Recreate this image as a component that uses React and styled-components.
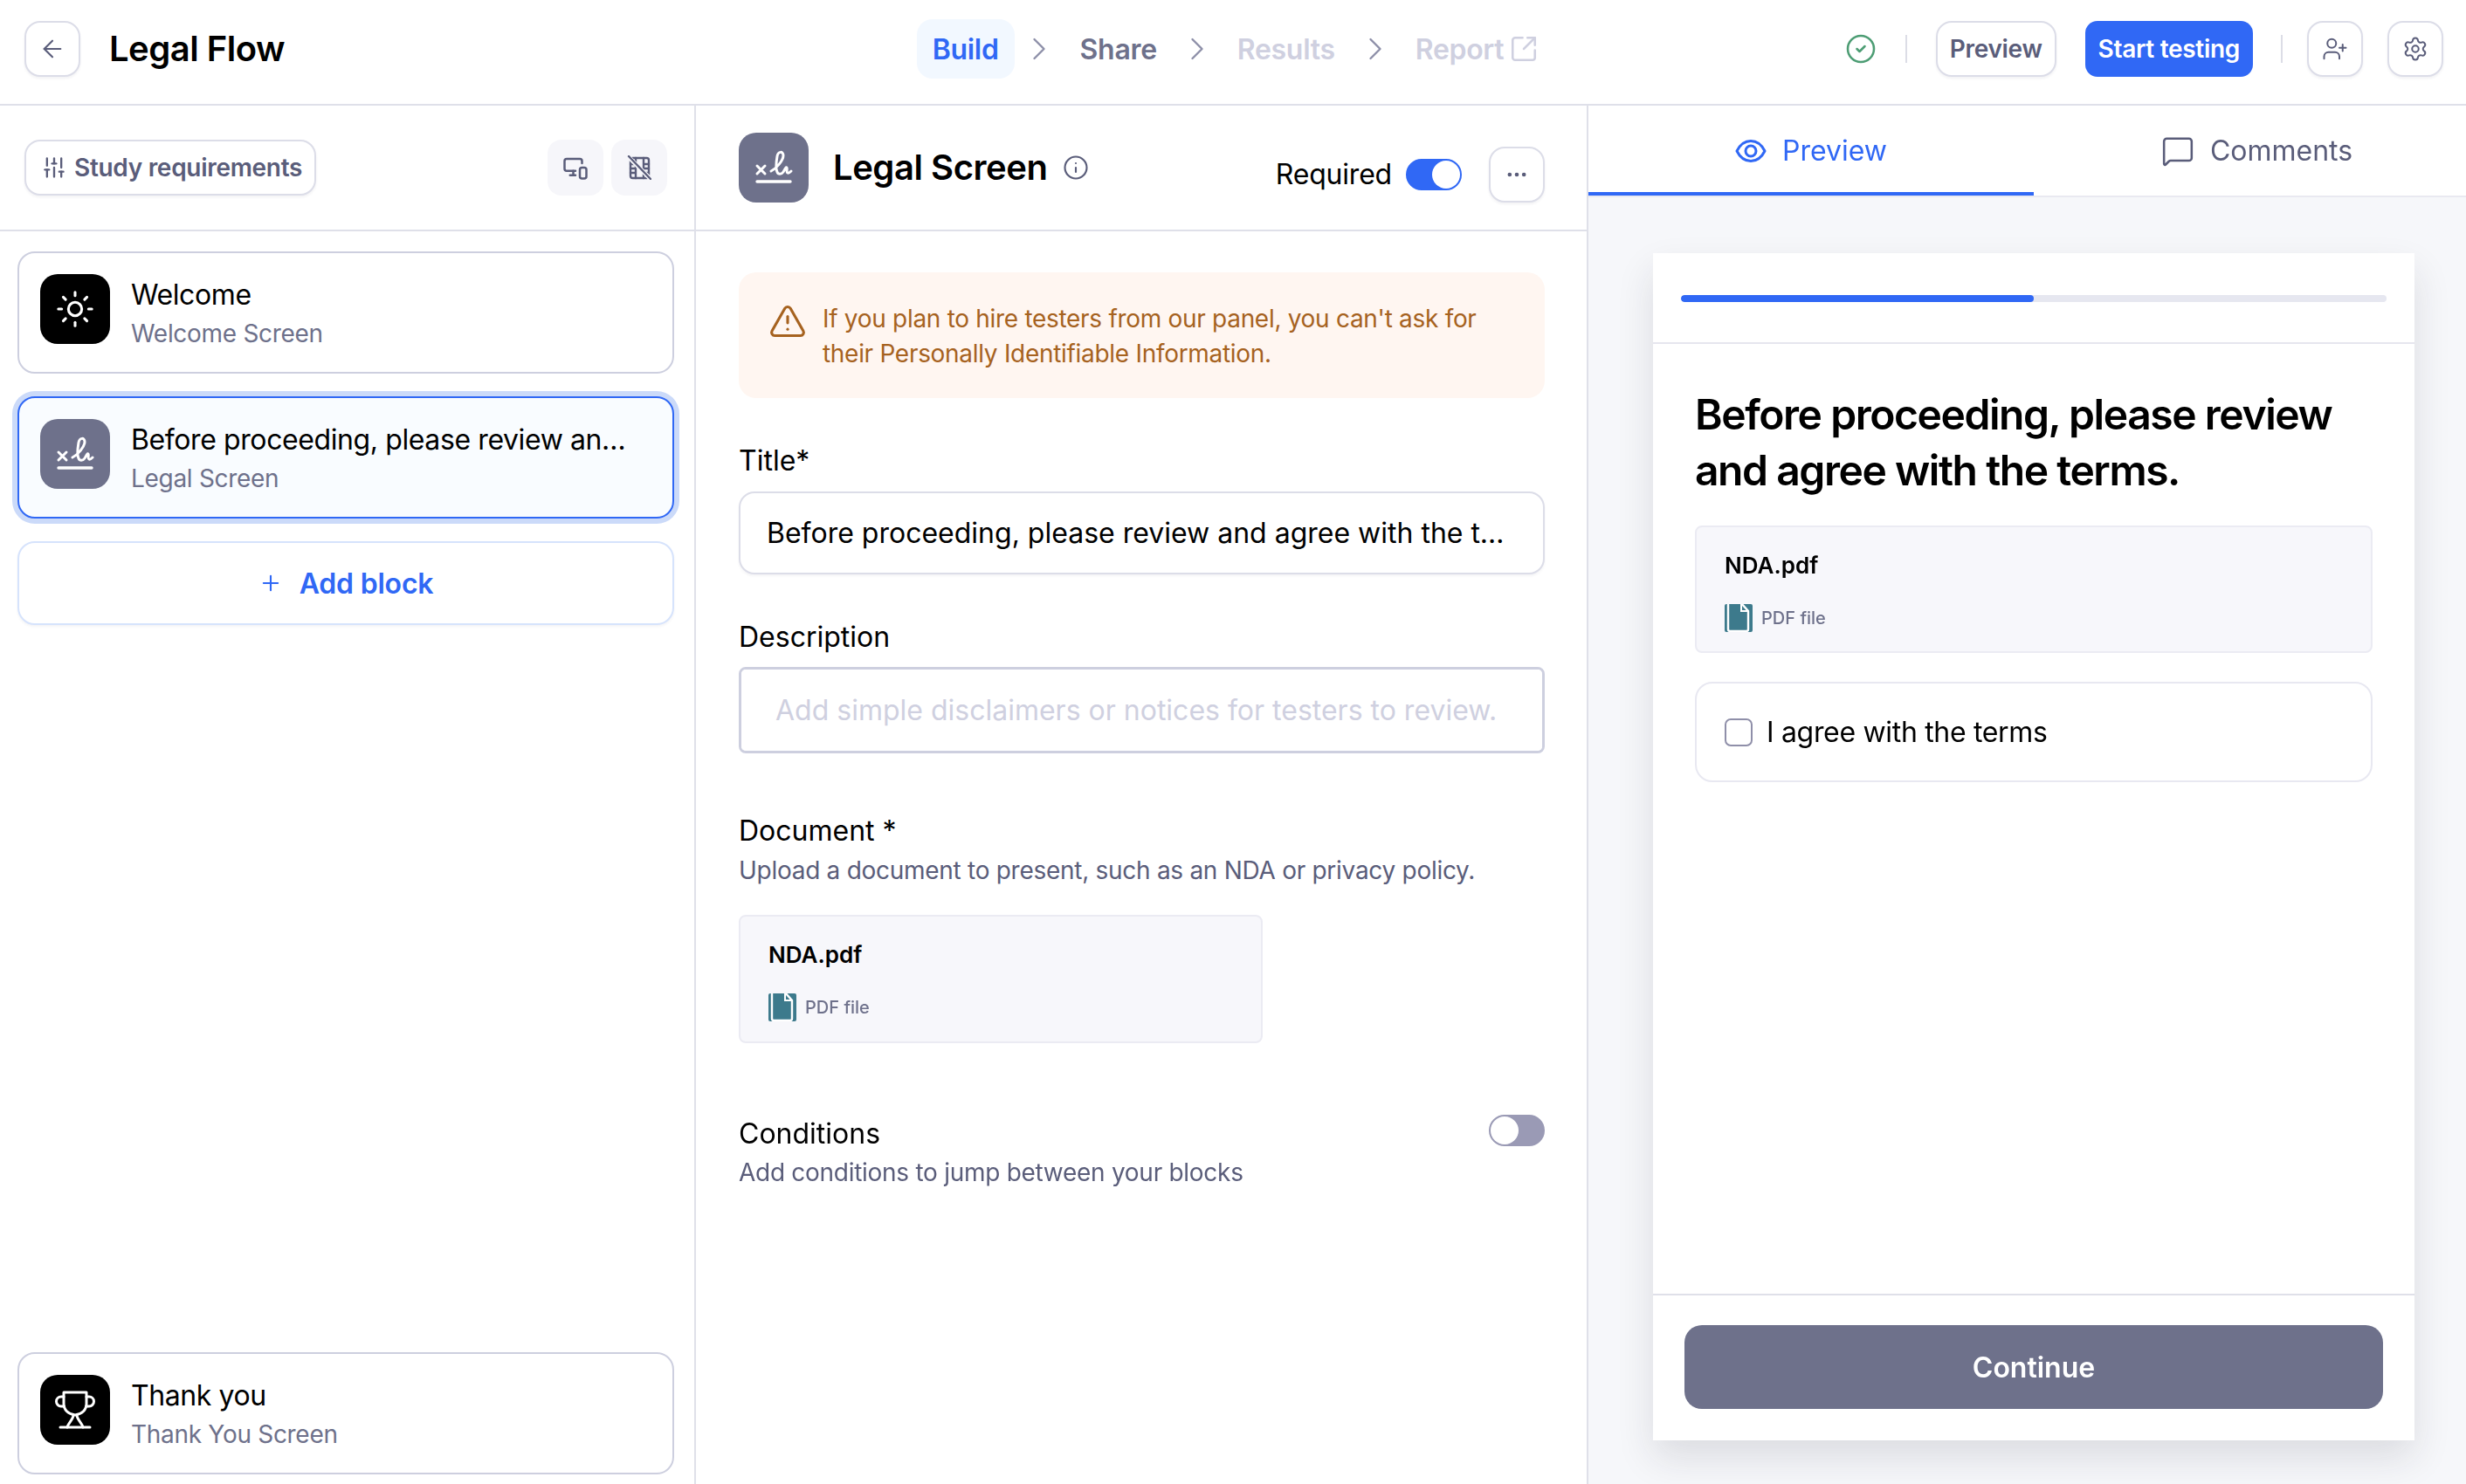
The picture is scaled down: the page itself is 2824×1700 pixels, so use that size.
import React from 'react';
import styled, { createGlobalStyle } from 'styled-components';
import {
  ArrowLeft, ChevronRight, SquareArrowOutUpRight, CircleCheck, UserPlus, Settings,
  SlidersVertical, MonitorSmartphone, Info, Ellipsis, Sun, Plus, TriangleAlert, MessageSquare,
} from 'lucide-react';

const Global = createGlobalStyle`
  * { box-sizing: border-box; }
  html, body { margin: 0; padding: 0; background: #fff; }
  body { font-family: Inter, "Noto Sans", sans-serif; color: #000; }
`;

const BLUE = '#3068f5';
const SLATE = '#5a5d7a';
const MUTED = '#6e718b';
const LINE = '#dfe0e9';

const Page = styled.div`
  width: 2824px;
  height: 1700px;
  display: flex;
  flex-direction: column;
  overflow: hidden;
`;

const TopBar = styled.header`
  height: 121px;
  flex: none;
  display: grid;
  grid-template-columns: 1fr auto 1fr;
  align-items: center;
  padding: 0 26px 7px 28px;
  border-bottom: 2px solid ${LINE};
`;

const TopLeft = styled.div`
  display: flex;
  align-items: center;
  gap: 33px;
`;

const AppTitle = styled.h1`
  margin: 0;
  font-size: 40px;
  line-height: 48px;
  font-weight: 600;
  letter-spacing: -0.5px;
`;

const OutlineButton = styled.button`
  height: 64px;
  min-width: 64px;
  padding: ${(p) => (p.$square ? '0' : '0 14px')};
  display: inline-flex;
  align-items: center;
  justify-content: center;
  background: #fff;
  border: 2px solid #dcdde8;
  border-radius: 18px;
  box-shadow: 0 2px 3px rgba(30, 32, 70, 0.06);
  color: ${SLATE};
  font: 600 28px Inter, sans-serif;
  letter-spacing: -0.3px;
`;

const Steps = styled.nav`
  display: flex;
  align-items: center;
  margin-right: 14px;
`;

const Step = styled.span`
  height: 68px;
  padding: 0 ${(p) => (p.$active ? '18px' : '0')};
  display: inline-flex;
  align-items: center;
  gap: 6px;
  border-radius: 18px;
  font-size: 32px;
  font-weight: 600;
  letter-spacing: -0.3px;
  background: ${(p) => (p.$active ? '#f2f8ff' : 'transparent')};
  color: ${(p) => p.$color};
`;

const StepChevron = styled(ChevronRight)`
  color: #8d8fa8;
  margin: 0 ${(p) => p.$right}px 0 ${(p) => p.$left}px;
  flex: none;
`;

const TopRight = styled.div`
  display: flex;
  align-items: center;
  justify-content: flex-end;
`;

const BarDivider = styled.span`
  width: 2px;
  height: 32px;
  background: #dcdde6;
  margin: 0 ${(p) => p.$right}px 0 ${(p) => p.$left}px;
`;

const PrimaryButton = styled.button`
  height: 64px;
  padding: 0 15px;
  border: 0;
  border-radius: 14px;
  margin-left: 33px;
  background: ${BLUE};
  color: #fff;
  font: 600 28px Inter, sans-serif;
  letter-spacing: -0.3px;
`;

const IconGap = styled.span`
  width: 28px;
`;

const Body = styled.main`
  flex: 1;
  min-height: 0;
  display: grid;
  grid-template-columns: 797px 1022px 1fr;
`;

const Sidebar = styled.aside`
  display: flex;
  flex-direction: column;
  border-right: 2px solid ${LINE};
  min-height: 0;
`;

const PanelHead = styled.div`
  height: 144px;
  flex: none;
  display: flex;
  align-items: center;
  justify-content: space-between;
  border-bottom: 2px solid ${LINE};
  padding: ${(p) => p.$padding};
`;

const RequirementsChip = styled(OutlineButton)`
  gap: 9px;
  padding: 0 14px 0 18px;
`;

const MiniGroup = styled.div`
  display: flex;
  gap: 9px;
`;

const MiniButton = styled.span`
  width: 64px;
  height: 64px;
  display: flex;
  align-items: center;
  justify-content: center;
  background: #f6f6fa;
  border-radius: 16px;
  color: ${SLATE};
`;

const BlockList = styled.div`
  flex: 1;
  display: flex;
  flex-direction: column;
  gap: 26px;
  padding: 23px 23px 11px 20px;
`;

const BlockCard = styled.div`
  height: 140px;
  flex: none;
  display: flex;
  align-items: flex-start;
  gap: 24px;
  padding: 24px 24px 0;
  border-radius: 20px;
  border: ${(p) => (p.$selected ? `2px solid ${BLUE}` : '2px solid #cdcfdf')};
  background: ${(p) => (p.$selected ? '#f9fcff' : '#fff')};
  box-shadow: ${(p) => (p.$selected ? '0 0 0 6px #cbdaf9' : 'none')};
  margin-top: ${(p) => (p.$bottom ? 'auto' : '0')};
`;

const Tile = styled.span`
  width: 80px;
  height: 80px;
  flex: none;
  border-radius: 20px;
  display: flex;
  align-items: center;
  justify-content: center;
  color: #fff;
  background: ${(p) => (p.$dark ? '#000' : MUTED)};
`;

const BlockText = styled.div`
  min-width: 0;
  flex: 1;
  margin-top: 2px;
`;

const BlockTitle = styled.div`
  font-size: 32px;
  line-height: 44px;
  letter-spacing: -0.4px;
  white-space: nowrap;
  overflow: hidden;
  text-overflow: ellipsis;
  padding-right: 24px;
`;

const BlockSub = styled.div`
  margin-top: 2px;
  font-size: 28px;
  line-height: 40px;
  letter-spacing: -0.3px;
  color: ${MUTED};
`;

const AddBlock = styled.button`
  height: 96px;
  flex: none;
  display: flex;
  align-items: center;
  justify-content: center;
  gap: 19px;
  background: #fff;
  border: 2px solid #d6e3fc;
  border-radius: 20px;
  box-shadow: 0 2px 3px rgba(30, 32, 70, 0.05);
  color: ${BLUE};
  font: 600 32px Inter, sans-serif;
  letter-spacing: -0.2px;
`;

const Editor = styled.section`
  display: flex;
  flex-direction: column;
  border-right: 2px solid ${LINE};
  min-height: 0;
`;

const HeadLeft = styled.div`
  display: flex;
  align-items: center;
  gap: 28px;
`;

const ScreenName = styled.h2`
  margin: 0;
  font-size: 40px;
  line-height: 48px;
  font-weight: 600;
  letter-spacing: -0.45px;
`;

const InfoMark = styled(Info)`
  margin-left: -11px;
`;

const HeadRight = styled.div`
  display: flex;
  align-items: center;
  padding-top: 16px;
`;

const RequiredLabel = styled.span`
  font-size: 32px;
  line-height: 40px;
  letter-spacing: -0.2px;
  margin-right: 16px;
`;

const Toggle = styled.span`
  width: 64px;
  height: 36px;
  flex: none;
  display: flex;
  justify-content: ${(p) => (p.$on ? 'flex-end' : 'flex-start')};
  border-radius: 18px;
  background: ${(p) => (p.$on ? BLUE : '#9a9ab5')};
  border: 2px solid ${(p) => (p.$on ? BLUE : '#9a9ab5')};

  &::after {
    content: '';
    width: 32px;
    height: 32px;
    border-radius: 50%;
    background: #fff;
  }
`;

const MoreButton = styled(OutlineButton)`
  margin-left: 31px;
`;

const EditorBody = styled.div`
  padding: 47px 48px 0 49px;
`;

const Alert = styled.div`
  height: 144px;
  display: flex;
  gap: 18px;
  padding: 33px 34px;
  background: #fff6f1;
  border-radius: 20px;
  color: #a6621f;
  font-size: 28px;
  line-height: 40px;
  letter-spacing: -0.3px;
`;

const AlertIcon = styled(TriangleAlert)`
  flex: none;
  margin-top: 1px;
`;

const Label = styled.div`
  font-size: 32px;
  line-height: 40px;
  margin-top: ${(p) => p.$top}px;
`;

const Hint = styled.div`
  font-size: 28px;
  line-height: 40px;
  letter-spacing: -0.28px;
  color: ${SLATE};
  margin-top: ${(p) => p.$top}px;
`;

const TitleField = styled.div`
  margin-top: 15px;
  height: 95px;
  padding: 0 30px;
  display: flex;
  align-items: center;
  background: #fff;
  border: 2px solid #dcdde8;
  border-radius: 18px;
  box-shadow: 0 2px 3px rgba(30, 32, 70, 0.05);
  font-size: 32px;
`;

const FieldValue = styled.span`
  min-width: 0;
  white-space: nowrap;
  overflow: hidden;
  text-overflow: ellipsis;
`;

const DescField = styled.textarea`
  display: block;
  width: 100%;
  margin-top: 14px;
  height: 99px;
  padding: 27px 39px;
  resize: none;
  outline: none;
  background: #fff;
  border: 3px solid #cdcfdf;
  border-radius: 8px;
  font: 400 32px/40px Inter, sans-serif;

  &::placeholder {
    color: #cfd0e0;
    opacity: 1;
  }
`;

const FileCard = styled.div`
  height: ${(p) => (p.$wide ? '146px' : '147px')};
  width: ${(p) => (p.$wide ? '100%' : '600px')};
  margin-top: ${(p) => (p.$wide ? '0' : '31px')};
  padding: 28px 32px 0;
  background: #f7f7fb;
  border: 2px solid #ebebf3;
  border-radius: 8px;
`;

const FileName = styled.div`
  font-size: 26px;
  line-height: 32px;
  font-weight: 600;
`;

const FileMeta = styled.div`
  margin-top: 28px;
  display: flex;
  align-items: center;
  gap: 10px;
  font-size: 20px;
  line-height: 32px;
  font-weight: 500;
  color: ${MUTED};
`;

const ConditionRow = styled.div`
  margin-top: 82px;
  display: flex;
  justify-content: space-between;
  align-items: flex-start;
`;

const ConditionLabel = styled(Label)`
  margin-top: 2px;
`;

const PreviewPane = styled.section`
  display: flex;
  flex-direction: column;
  background: #f6f7fa;
  min-height: 0;
`;

const Tabs = styled.div`
  height: 105px;
  flex: none;
  display: grid;
  grid-template-columns: 510px 1fr;
  background: #fff;
  border-bottom: 2px solid #e9e9f1;
`;

const Tab = styled.div`
  display: flex;
  align-items: center;
  justify-content: center;
  gap: 18px;
  padding-top: 4px;
  padding-left: ${(p) => (p.$active ? '0' : '16px')};
  font-size: 32px;
  color: ${(p) => (p.$active ? BLUE : SLATE)};
  border-bottom: 4px solid ${(p) => (p.$active ? BLUE : 'transparent')};
  height: 103px;
`;

const PreviewStage = styled.div`
  flex: 1;
  min-height: 0;
  padding: 64px 59px 50px 74px;
  display: flex;
`;

const PreviewCard = styled.div`
  flex: 1;
  display: flex;
  flex-direction: column;
  background: #fff;
  box-shadow: 0 20px 40px rgba(30, 32, 50, 0.12);
`;

const ProgressWrap = styled.div`
  height: 104px;
  flex: none;
  padding: 48px 32px 0;
  border-bottom: 2px solid #e6e6ee;
`;

const ProgressTrack = styled.div`
  height: 8px;
  border-radius: 4px;
  background: #e6e7f0;
  overflow: hidden;
`;

const ProgressFill = styled.div`
  height: 100%;
  border-radius: 4px;
  background: ${BLUE};
`;

const PreviewBody = styled.div`
  flex: 1;
  padding: 49px 48px 0;
  display: flex;
  flex-direction: column;
`;

const PreviewHeading = styled.h3`
  margin: 0 0 31px;
  font-size: 48px;
  line-height: 64px;
  font-weight: 600;
  letter-spacing: -1.44px;
`;

const AgreeBox = styled.label`
  height: 115px;
  margin-top: 33px;
  display: flex;
  align-items: center;
  gap: 16px;
  padding: 0 32px;
  border: 2px solid #e8e8f1;
  border-radius: 20px;
  font-size: 32px;
  letter-spacing: -0.32px;
`;

const Check = styled.span`
  width: 32px;
  height: 32px;
  flex: none;
  border: 2px solid #8f8fa9;
  border-radius: 7px;
  background: #fff;
`;

const PreviewFooter = styled.div`
  flex: none;
  padding: 34px 36px 36px;
  border-top: 2px solid #dfe0e9;
`;

const ContinueButton = styled.button`
  width: 100%;
  height: 96px;
  border: 0;
  border-radius: 20px;
  background: ${MUTED};
  color: #fff;
  font: 600 32px Inter, sans-serif;
`;

const SignatureIcon = () => (
  <svg width="80" height="80" viewBox="0 0 80 80" fill="none" stroke="currentColor" strokeLinecap="round" strokeLinejoin="round">
    <path d="M21 38l9 9M30 38l-9 9" strokeWidth="3" />
    <path d="M37 44c6-3 14-12 14-18 0-5-6-5-7 1-1 6-2 14 0 18 1 3 5 3 7 0 2-3 3-6 4-5 1 1-1 5 1 6 1 1 3-1 4-2" strokeWidth="3" />
    <path d="M21 56h38" strokeWidth="3.4" />
  </svg>
);

const TrophyIcon = () => (
  <svg width="80" height="80" viewBox="0 0 80 80" fill="none" stroke="currentColor" strokeWidth="3" strokeLinecap="round" strokeLinejoin="round">
    <path d="M27 20h26v13c0 7-5 12-13 13-8-1-13-6-13-13z" />
    <path d="M27 25h-3a5.500 5.500 0 0 0 0 11h3.500M53 25h3a5.500 5.500 0 0 1 0 11h-3.500" />
    <path d="M38 46c0 5-6 9-7 14M42 46c0 5 6 9 7 14" />
    <path d="M23 60h34" />
  </svg>
);

const EyeIcon = () => (
  <svg width="36" height="28" viewBox="0 0 36 28" fill="none" stroke="currentColor" strokeWidth="3" strokeLinejoin="round">
    <path d="M2 14C6 6 11 2.500 18 2.500S30 6 34 14c-4 8-9 11.500-16 11.500S6 22 2 14z" />
    <circle cx="18" cy="14" r="6" />
  </svg>
);

const FilmOffIcon = () => (
  <svg width="28" height="28" viewBox="0 0 28 28" fill="none" stroke="currentColor" strokeWidth="2.400" strokeLinecap="round">
    <rect x="4" y="3" width="21" height="23" rx="2.500" />
    <path d="M10 3v23M19 3v23M4 10h6M4 15h6M4 20h6M19 10h6M19 15h6M19 20h6" />
    <path d="M2 2l25 25" stroke="#f6f6fa" strokeWidth="5" />
    <path d="M2 1l25 26" />
  </svg>
);

const PdfIcon = () => (
  <svg width="32" height="32" viewBox="0 0 32 32">
    <rect width="32" height="32" rx="2" fill="#3d7a8c" />
    <path d="M4 -1V29a2 2 0 0 0 2 2H25a2 2 0 0 0 2-2V8L19-1" fill="none" stroke="#fff" strokeWidth="2.400" />
    <path d="M19 -1V8H27" fill="none" stroke="#fff" strokeWidth="2" />
  </svg>
);

const FileTile = ({ wide }) => (
  <FileCard $wide={wide}>
    <FileName>NDA.pdf</FileName>
    <FileMeta>
      <PdfIcon />
      PDF file
    </FileMeta>
  </FileCard>
);

const Block = ({ icon, dark, title, sub, selected, bottom }) => (
  <BlockCard $selected={selected} $bottom={bottom}>
    <Tile $dark={dark}>{icon}</Tile>
    <BlockText>
      <BlockTitle>{title}</BlockTitle>
      <BlockSub>{sub}</BlockSub>
    </BlockText>
  </BlockCard>
);

const TERMS = 'Before proceeding, please review and agree with the terms.';

export default function App() {
  return (
    <Page>
      <Global />
      <TopBar>
        <TopLeft>
          <OutlineButton $square>
            <ArrowLeft size={32} strokeWidth={1.6} />
          </OutlineButton>
          <AppTitle>Legal Flow</AppTitle>
        </TopLeft>
        <Steps>
          <Step $active $color={BLUE}>Build</Step>
          <StepChevron size={44} strokeWidth={1.3} $left={6} $right={25} />
          <Step $color={MUTED}>Share</Step>
          <StepChevron size={44} strokeWidth={1.3} $left={24} $right={24} />
          <Step $color="#cfd0e0">Results</Step>
          <StepChevron size={44} strokeWidth={1.3} $left={24} $right={24} />
          <Step $color="#cfd0e0">
            Report
            <SquareArrowOutUpRight size={34} strokeWidth={1.8} />
          </Step>
        </Steps>
        <TopRight>
          <CircleCheck size={36} color="#4d9d74" strokeWidth={1.7} />
          <BarDivider $left={33} $right={33} />
          <OutlineButton>Preview</OutlineButton>
          <PrimaryButton>Start testing</PrimaryButton>
          <BarDivider $left={32} $right={28} />
          <OutlineButton $square>
            <UserPlus size={30} strokeWidth={1.6} />
          </OutlineButton>
          <IconGap />
          <OutlineButton $square>
            <Settings size={30} strokeWidth={1.6} />
          </OutlineButton>
        </TopRight>
      </TopBar>

      <Body>
        <Sidebar>
          <PanelHead $padding="0 31px 0 28px">
            <RequirementsChip>
              <SlidersVertical size={28} strokeWidth={2} />
              Study requirements
            </RequirementsChip>
            <MiniGroup>
              <MiniButton><MonitorSmartphone size={30} strokeWidth={2} /></MiniButton>
              <MiniButton><FilmOffIcon /></MiniButton>
            </MiniGroup>
          </PanelHead>
          <BlockList>
            <Block dark icon={<Sun size={46} strokeWidth={1.6} />} title="Welcome" sub="Welcome Screen" />
            <Block selected icon={<SignatureIcon />} title={TERMS} sub="Legal Screen" />
            <AddBlock>
              <Plus size={28} strokeWidth={1.8} />
              Add block
            </AddBlock>
            <Block bottom dark icon={<TrophyIcon />} title="Thank you" sub="Thank You Screen" />
          </BlockList>
        </Sidebar>

        <Editor>
          <PanelHead $padding="0 48px 0 49px">
            <HeadLeft>
              <Tile><SignatureIcon /></Tile>
              <ScreenName>Legal Screen</ScreenName>
              <InfoMark size={30} color={SLATE} strokeWidth={1.7} />
            </HeadLeft>
            <HeadRight>
              <RequiredLabel>Required</RequiredLabel>
              <Toggle $on />
              <MoreButton $square><Ellipsis size={28} /></MoreButton>
            </HeadRight>
          </PanelHead>
          <EditorBody>
            <Alert>
              <AlertIcon size={44} strokeWidth={1.7} />
              <div>
                If you plan to hire testers from our panel, you can't ask for their Personally Identifiable Information.
              </div>
            </Alert>
            <Label $top={52}>Title*</Label>
            <TitleField><FieldValue>{TERMS}</FieldValue></TitleField>
            <Label $top={52}>Description</Label>
            <DescField readOnly placeholder="Add simple disclaimers or notices for testers to review." />
            <Label $top={69}>Document *</Label>
            <Hint $top={5}>Upload a document to present, such as an NDA or privacy policy.</Hint>
            <FileTile />
            <ConditionRow>
              <div>
                <ConditionLabel>Conditions</ConditionLabel>
                <Hint $top={4}>Add conditions to jump between your blocks</Hint>
              </div>
              <Toggle />
            </ConditionRow>
          </EditorBody>
        </Editor>

        <PreviewPane>
          <Tabs>
            <Tab $active><EyeIcon />Preview</Tab>
            <Tab><MessageSquare size={38} strokeWidth={1.6} />Comments</Tab>
          </Tabs>
          <PreviewStage>
            <PreviewCard>
              <ProgressWrap>
                <ProgressTrack>
                  <ProgressFill style={{ width: '50%' }} />
                </ProgressTrack>
              </ProgressWrap>
              <PreviewBody>
                <PreviewHeading>{TERMS}</PreviewHeading>
                <FileTile wide />
                <AgreeBox>
                  <Check />
                  I agree with the terms
                </AgreeBox>
              </PreviewBody>
              <PreviewFooter>
                <ContinueButton>Continue</ContinueButton>
              </PreviewFooter>
            </PreviewCard>
          </PreviewStage>
        </PreviewPane>
      </Body>
    </Page>
  );
}
